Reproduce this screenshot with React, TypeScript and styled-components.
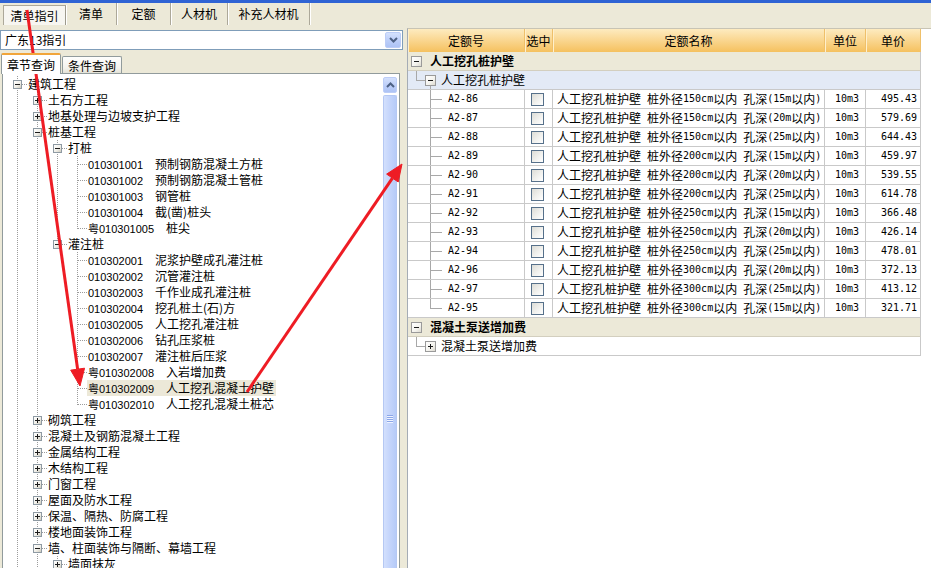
import React from 'react';
import styled, { createGlobalStyle, css } from 'styled-components';

const GlobalStyle = createGlobalStyle`
  * { box-sizing: border-box; }
  html, body { margin: 0; padding: 0; background: #ece9d8; overflow: hidden; }
  body {
    font-family: "Noto Sans CJK SC", "Liberation Sans", sans-serif;
    font-size: 12px;
    color: #000;
  }
`;

const Window = styled.div`
  position: relative;
  width: 931px;
  height: 568px;
  display: flex;
  flex-direction: column;
  overflow: hidden;
  background: #ece9d8;
`;

const TitleEdge = styled.div`
  flex: none;
  height: 3px;
  background: #2f63d4;
`;

const TabBar = styled.div`
  flex: none;
  display: flex;
  height: 22px;
  padding-left: 3px;
`;

const Tab = styled.div<{ $w: number; $active?: boolean }>`
  width: ${p => p.$w}px;
  display: flex;
  align-items: center;
  justify-content: center;
  border-right: 1px solid #aca899;
  box-shadow: 1px 0 0 #fff;
  line-height: 1;
  ${p =>
    p.$active &&
    css`
      margin-top: 2px;
      background: #f7f6f1;
      border: 1px solid #aca899;
      border-bottom: none;
      border-right-color: #9d9a8c;
    `}
`;

const Main = styled.div`
  flex: 1;
  min-height: 0;
  display: flex;
`;

/* ---------- left side ---------- */

const LeftPane = styled.div`
  width: 404px;
  flex: none;
  display: flex;
  flex-direction: column;
`;

const Combo = styled.div`
  margin-top: 5px;
  height: 20px;
  width: 403px;
  display: flex;
  align-items: center;
  background: #fff;
  border: 1px solid #7f9db9;
  padding: 1px;
`;

const ComboText = styled.span`
  flex: 1;
  padding-left: 3px;
  line-height: 16px;
`;

const BlueButton = styled.div`
  width: 16px;
  height: 16px;
  display: flex;
  align-items: center;
  justify-content: center;
  border: 1px solid #bccdf7;
  border-radius: 2px;
  background: linear-gradient(to bottom, #d4e1fd 0%, #bccef9 55%, #adc3f5 100%);
`;

const SubTabs = styled.div`
  margin-top: 3px;
  height: 20px;
  display: flex;
  align-items: flex-end;
  padding-left: 1px;
`;

const SubTab = styled.div<{ $active?: boolean }>`
  display: flex;
  align-items: center;
  padding: 0 5px;
  border: 1px solid #919b9c;
  border-bottom: none;
  border-radius: 2px 2px 0 0;
  ${p =>
    p.$active
      ? css`
          position: relative;
          z-index: 1;
          height: 21px;
          margin-bottom: -1px;
          background: #fff;
          border-top: 2px solid #f1a53a;
          padding-bottom: 1px;
        `
      : css`
          height: 17px;
          margin-left: 1px;
          background: linear-gradient(to bottom, #fefefd 0%, #f3f2ec 70%, #e3e1d6 100%);
        `}
`;

const TreeBox = styled.div`
  flex: 1;
  min-height: 0;
  margin-left: 2px;
  width: 398px;
  display: flex;
  border: 1px solid #919b9c;
  border-bottom: none;
  background: #fff;
`;

const TreeList = styled.div`
  flex: 1;
  overflow: hidden;
  padding: 2px 0 0 4px;
`;

const TreeRow = styled.div`
  display: flex;
  height: 16px;
  white-space: nowrap;
`;

const dotV = '#9c9c9c';

const Guide = styled.div<{ $line: boolean }>`
  flex: none;
  width: 20px;
  height: 16px;
  ${p =>
    p.$line &&
    css`
      background: repeating-linear-gradient(to bottom, ${dotV} 0 1px, transparent 1px 2px) 10px 0 / 1px 100% no-repeat;
    `}
`;

const Joint = styled.div<{ $last?: boolean }>`
  flex: none;
  width: 20px;
  height: 16px;
  display: flex;
  align-items: flex-start;
  padding: 4px 0 0 6px;
  background:
    repeating-linear-gradient(to bottom, ${dotV} 0 1px, transparent 1px 2px) 10px 0 / 1px ${p => (p.$last ? '9px' : '100%')} no-repeat,
    repeating-linear-gradient(to right, ${dotV} 0 1px, transparent 1px 2px) 11px 8px / 9px 1px no-repeat;
`;

const Toggle = styled.span<{ $open?: boolean }>`
  position: relative;
  display: block;
  width: 9px;
  height: 9px;
  border: 1px solid #8e9aa3;
  background: linear-gradient(135deg, #ffffff 0%, #f1f0ea 55%, #cfcbbd 100%);
  &::before {
    content: '';
    position: absolute;
    left: 1px;
    top: 3px;
    width: 5px;
    height: 1px;
    background: #1b1b1b;
  }
  ${p =>
    !p.$open &&
    css`
      &::after {
        content: '';
        position: absolute;
        left: 3px;
        top: 1px;
        width: 1px;
        height: 5px;
        background: #1b1b1b;
      }
    `}
`;

const Label = styled.span<{ $selected?: boolean }>`
  height: 16px;
  line-height: 16px;
  padding: 0 2px 0 1px;
  background: ${p => (p.$selected ? '#ece8d8' : 'transparent')};
`;

const Code = styled.span`
  font-family: "Liberation Sans", "Noto Sans CJK SC", sans-serif;
  font-size: 11px;
  margin-right: 12px;
`;

const ScrollCol = styled.div`
  flex: none;
  width: 17px;
  padding: 3px 2px 0 1px;
  display: flex;
  flex-direction: column;
  gap: 2px;
`;

const ScrollUp = styled(BlueButton)`
  width: 14px;
  height: 16px;
`;

const Thumb = styled.div`
  flex: 1;
  display: flex;
  justify-content: center;
  padding-top: 319px;
  border: 1px solid #b5c8f3;
  border-bottom: none;
  border-radius: 2px 2px 0 0;
  background: linear-gradient(to right, #d3e0fd 0%, #c3d4fb 50%, #b6cbf8 100%);
`;

const Grip = styled.div`
  width: 6px;
  height: 8px;
  background: repeating-linear-gradient(to bottom, #8ba6e8 0 1px, #eef3ff 1px 2px);
`;

/* ---------- right side ---------- */

const RightPane = styled.div`
  flex: 1;
  margin: 3px 0 0 3px;
  border-left: 1px solid #a5acb5;
  border-top: 1px solid #c8c4b4;
  background: #fff;
  overflow: hidden;
`;

const Grid = styled.div`
  width: 513px;
`;

const cols = [117, 28, 272, 41, 55];
const lineGray = '#c9c9c9';
const treeGray = '#a8a8a8';

const HeaderRow = styled.div`
  display: flex;
  height: 23px;
  background: linear-gradient(to bottom, #fdebc0 0%, #fad894 45%, #f5c15f 100%);
`;

const HeadCell = styled.div<{ $w: number }>`
  flex: none;
  width: ${p => p.$w}px;
  display: flex;
  align-items: center;
  justify-content: center;
  border-right: 1px solid #efc06a;
  box-shadow: inset 1px 0 0 #fff0cc;
`;

const GroupRow = styled.div<{ $tone: 'group' | 'sub' }>`
  position: relative;
  display: flex;
  align-items: center;
  height: 19px;
  border-bottom: 1px solid ${p => (p.$tone === 'group' ? '#d3cfbf' : lineGray)};
  border-right: 1px solid ${lineGray};
  background: ${p => (p.$tone === 'group' ? '#ece9d8' : '#e3eaf6')};
  padding-left: ${p => (p.$tone === 'group' ? 3 : 17)}px;
  font-weight: ${p => (p.$tone === 'group' ? 700 : 400)};
`;

const SubRow = styled(GroupRow)<{ $plain?: boolean; $down?: boolean }>`
  ${p => p.$plain && css`background: #fff;`}
  background-image:
    linear-gradient(${treeGray}, ${treeGray}),
    linear-gradient(${treeGray}, ${treeGray})
    ${p => (p.$down ? `, linear-gradient(${treeGray}, ${treeGray})` : '')};
  background-repeat: no-repeat;
  background-position: 8px 0, 8px 9px ${p => (p.$down ? ', 22px 14px' : '')};
  background-size: 1px 9px, 9px 1px ${p => (p.$down ? ', 1px 5px' : '')};
`;

const GroupToggle = styled(Toggle)`
  width: 11px;
  height: 11px;
  border-color: #9a9a9a;
  background: linear-gradient(135deg, #ffffff 0%, #f4f3ee 60%, #dddad0 100%);
  &::before {
    left: 2px;
    top: 4px;
  }
  &::after {
    left: 4px;
    top: 2px;
  }
`;

const GroupText = styled.span`
  margin-left: ${p => 8}px;
  line-height: 18px;
`;

const SubText = styled.span`
  margin-left: 5px;
  line-height: 18px;
`;

const DataRow = styled.div`
  display: flex;
  height: 19px;
  border-bottom: 1px solid ${lineGray};
`;

const Cell = styled.div<{ $w: number; $align?: 'left' | 'center' | 'right' }>`
  flex: none;
  width: ${p => p.$w}px;
  display: flex;
  align-items: center;
  justify-content: ${p => (p.$align === 'right' ? 'flex-end' : p.$align === 'center' ? 'center' : 'flex-start')};
  padding: 0 ${p => (p.$align === 'right' ? 3 : 4)}px 0 ${p => (p.$align === 'left' ? 4 : 0)}px;
  border-right: 1px solid ${lineGray};
  white-space: pre;
  overflow: hidden;
  line-height: 18px;
`;

const CodeCell = styled(Cell)<{ $last?: boolean }>`
  padding-left: 40px;
  background:
    linear-gradient(${treeGray}, ${treeGray}) 22px 0 / 1px ${p => (p.$last ? '10px' : '100%')} no-repeat,
    linear-gradient(${treeGray}, ${treeGray}) 22px 9px / 12px 1px no-repeat;
`;

const Latin = styled.span`
  font-family: "DejaVu Sans Mono", "Liberation Mono", monospace;
  font-size: 10px;
`;

const Check = styled.span`
  width: 13px;
  height: 13px;
  margin-left: 1px;
  border: 1px solid #56708a;
  background: linear-gradient(135deg, #dcdcd6 0%, #f1f1ee 55%, #ffffff 100%);
`;

const Overlay = styled.svg`
  position: absolute;
  left: 0;
  top: 0;
  pointer-events: none;
`;

/* ---------- data ---------- */

interface TNode {
  label: string;
  code?: string;
  open?: boolean;
  kids?: boolean;
  last?: boolean;
  selected?: boolean;
  children?: TNode[];
}

const leaf = (code: string, label: string, extra: Partial<TNode> = {}): TNode => ({ code, label, ...extra });

const tree: TNode[] = [
  {
    label: '建筑工程',
    open: true,
    children: [
      { label: '土石方工程', kids: true },
      { label: '地基处理与边坡支护工程', kids: true },
      {
        label: '桩基工程',
        open: true,
        children: [
          {
            label: '打桩',
            open: true,
            children: [
              leaf('010301001', '预制钢筋混凝土方桩'),
              leaf('010301002', '预制钢筋混凝土管桩'),
              leaf('010301003', '钢管桩'),
              leaf('010301004', '截(凿)桩头'),
              leaf('粤010301005', '桩尖', { last: true }),
            ],
          },
          {
            label: '灌注桩',
            open: true,
            last: true,
            children: [
              leaf('010302001', '泥浆护壁成孔灌注桩'),
              leaf('010302002', '沉管灌注桩'),
              leaf('010302003', '千作业成孔灌注桩'),
              leaf('010302004', '挖孔桩土(石)方'),
              leaf('010302005', '人工挖孔灌注桩'),
              leaf('010302006', '钻孔压浆桩'),
              leaf('010302007', '灌注桩后压浆'),
              leaf('粤010302008', '入岩增加费'),
              leaf('粤010302009', '人工挖孔混凝土护壁', { selected: true }),
              leaf('粤010302010', '人工挖孔混凝土桩芯', { last: true }),
            ],
          },
        ],
      },
      { label: '砌筑工程', kids: true },
      { label: '混凝土及钢筋混凝土工程', kids: true },
      { label: '金属结构工程', kids: true },
      { label: '木结构工程', kids: true },
      { label: '门窗工程', kids: true },
      { label: '屋面及防水工程', kids: true },
      { label: '保温、隔热、防腐工程', kids: true },
      { label: '楼地面装饰工程', kids: true },
      {
        label: '墙、柱面装饰与隔断、幕墙工程',
        open: true,
        children: [{ label: '墙面抹灰', kids: true }],
      },
    ],
  },
];

interface FlatRow {
  node: TNode;
  guides: boolean[];
}

const flatten = (nodes: TNode[], guides: boolean[], out: FlatRow[]) => {
  nodes.forEach(node => {
    out.push({ node, guides });
    if (node.open && node.children) flatten(node.children, [...guides, !node.last], out);
  });
  return out;
};

const treeRows = flatten(tree, [], []);

const quotas: [string, number, number, string][] = [
  ['A2-86', 150, 15, '495.43'],
  ['A2-87', 150, 20, '579.69'],
  ['A2-88', 150, 25, '644.43'],
  ['A2-89', 200, 15, '459.97'],
  ['A2-90', 200, 20, '539.55'],
  ['A2-91', 200, 25, '614.78'],
  ['A2-92', 250, 15, '366.48'],
  ['A2-93', 250, 20, '426.14'],
  ['A2-94', 250, 25, '478.01'],
  ['A2-96', 300, 20, '372.13'],
  ['A2-97', 300, 25, '413.12'],
  ['A2-95', 300, 15, '321.71'],
];

const Mixed: React.FC<{ text: string }> = ({ text }) => (
  <>
    {text.split(/([\x20-\x7e]+)/).map((part, i) => (i % 2 ? <Latin key={i}>{part}</Latin> : part))}
  </>
);

const Chevron: React.FC<{ up?: boolean }> = ({ up }) => (
  <svg width="9" height="6" viewBox="0 0 9 6">
    <path
      d={up ? 'M1 5 L4.5 1.5 L8 5' : 'M1 1 L4.5 4.5 L8 1'}
      fill="none"
      stroke="#4d6185"
      strokeWidth="2"
    />
  </svg>
);

const Arrow: React.FC<{ x1: number; y1: number; x2: number; y2: number }> = ({ x1, y1, x2, y2 }) => {
  const len = Math.hypot(x2 - x1, y2 - y1);
  const dx = (x2 - x1) / len;
  const dy = (y2 - y1) / len;
  const bx = x2 - dx * 17;
  const by = y2 - dy * 17;
  const px = -dy * 7;
  const py = dx * 7;
  return (
    <g fill="#ee1c24" stroke="#ee1c24">
      <line x1={x1} y1={y1} x2={bx} y2={by} strokeWidth="3" />
      <polygon points={`${x2},${y2} ${bx + px},${by + py} ${bx - px},${by - py}`} strokeWidth="1" />
    </g>
  );
};

const tabs = [
  { label: '清单指引', w: 63, active: true },
  { label: '清单', w: 51 },
  { label: '定额', w: 54 },
  { label: '人材机', w: 57 },
  { label: '补充人材机', w: 82 },
];

const heads = ['定额号', '选中', '定额名称', '单位', '单价'];

const App: React.FC = () => {
  return (
    <Window>
      <GlobalStyle />
      <TitleEdge />
      <TabBar>
        {tabs.map(t => (
          <Tab key={t.label} $w={t.w} $active={t.active}>
            {t.label}
          </Tab>
        ))}
      </TabBar>

      <Main>
        <LeftPane>
          <Combo>
            <ComboText>广东13指引</ComboText>
            <BlueButton>
              <Chevron />
            </BlueButton>
          </Combo>

          <SubTabs>
            <SubTab $active>章节查询</SubTab>
            <SubTab>条件查询</SubTab>
          </SubTabs>

          <TreeBox>
            <TreeList>
              {treeRows.map(({ node, guides }, i) => (
                <TreeRow key={i}>
                  {guides.map((g, j) => (
                    <Guide key={j} $line={g} />
                  ))}
                  <Joint $last={node.last}>
                    {(node.kids || node.children) && <Toggle $open={node.open} />}
                  </Joint>
                  <Label $selected={node.selected}>
                    {node.code && <Code>{node.code}</Code>}
                    {node.label}
                  </Label>
                </TreeRow>
              ))}
            </TreeList>
            <ScrollCol>
              <ScrollUp>
                <Chevron up />
              </ScrollUp>
              <Thumb>
                <Grip />
              </Thumb>
            </ScrollCol>
          </TreeBox>
        </LeftPane>

        <RightPane>
          <Grid>
            <HeaderRow>
              {heads.map((h, i) => (
                <HeadCell key={h} $w={cols[i]}>
                  {h}
                </HeadCell>
              ))}
            </HeaderRow>

            <GroupRow $tone="group">
              <GroupToggle $open />
              <GroupText>人工挖孔桩护壁</GroupText>
            </GroupRow>
            <SubRow $tone="sub" $down>
              <GroupToggle $open />
              <SubText>人工挖孔桩护壁</SubText>
            </SubRow>

            {quotas.map(([code, dia, depth, price], i) => (
              <DataRow key={code}>
                <CodeCell $w={cols[0]} $last={i === quotas.length - 1}>
                  <Latin>{code}</Latin>
                </CodeCell>
                <Cell $w={cols[1]} $align="center">
                  <Check />
                </Cell>
                <Cell $w={cols[2]} $align="left">
                  <Mixed text={`人工挖孔桩护壁 桩外径${dia}cm以内 孔深(${depth}m以内)`} />
                </Cell>
                <Cell $w={cols[3]} $align="left">
                  <Mixed text=" 10m3" />
                </Cell>
                <Cell $w={cols[4]} $align="right">
                  <Latin>{price}</Latin>
                </Cell>
              </DataRow>
            ))}

            <GroupRow $tone="group">
              <GroupToggle $open />
              <GroupText>混凝土泵送增加费</GroupText>
            </GroupRow>
            <SubRow $tone="sub" $plain>
              <GroupToggle />
              <SubText>混凝土泵送增加费</SubText>
            </SubRow>
          </Grid>
        </RightPane>
      </Main>

      <Overlay width="931" height="568" viewBox="0 0 931 568">
        <Arrow x1={27} y1={10} x2={80} y2={386} />
        <Arrow x1={247} y1={392} x2={402} y2={164} />
      </Overlay>
    </Window>
  );
};

export default App;
